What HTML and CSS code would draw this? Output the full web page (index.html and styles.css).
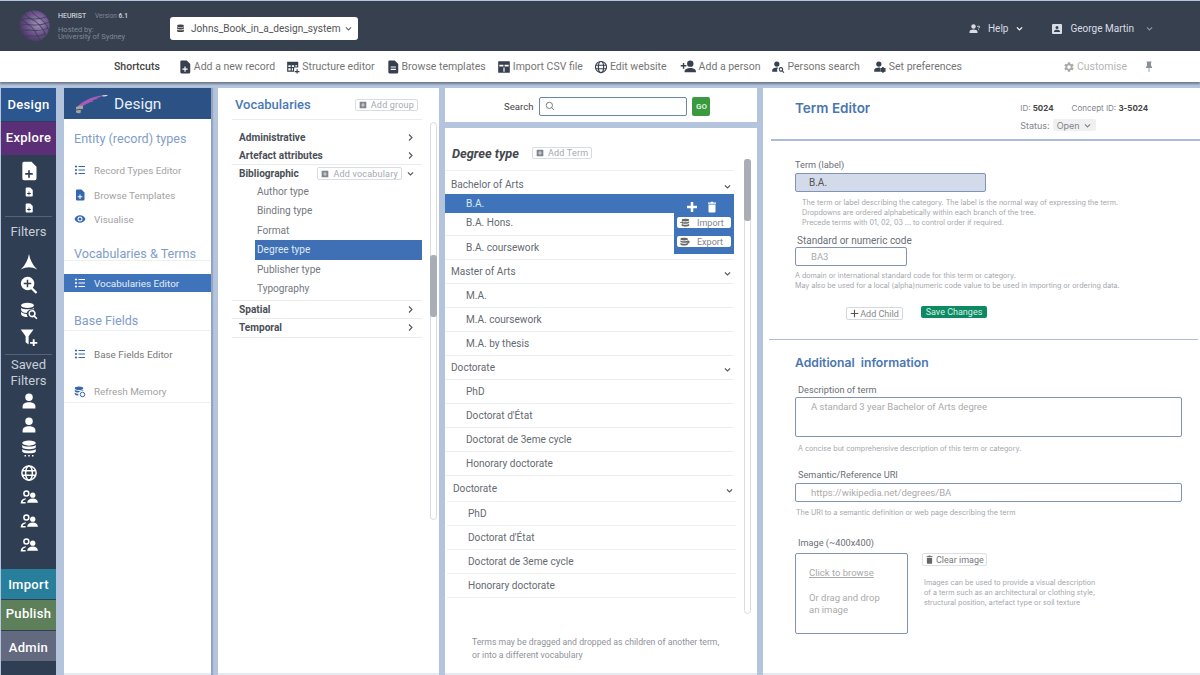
FILE: index.html
```html
<!DOCTYPE html>
<html lang="en">
<head>
  <meta charset="UTF-8" />
  <meta name="viewport" content="width=device-width, initial-scale=1.0" />
  <title>Heurist - Design</title>
  <link rel="stylesheet" href="styles.css">
</head>
<body>
  <svg class="sprite" xmlns="http://www.w3.org/2000/svg">
    <symbol id="i-db" viewBox="0 0 24 24"><ellipse cx="12" cy="5" rx="9" ry="3.5"/><path d="M3 8c2 3 16 3 18 0v4c-2 3.5-16 3.5-18 0zM3 14.5c2 3 16 3 18 0V19c-2 3.5-16 3.5-18 0z"/></symbol>
    <symbol id="i-doc-plus" viewBox="0 0 24 24"><path fill-rule="evenodd" d="M6 1h9l6 6v14a2 2 0 0 1-2 2H6a2 2 0 0 1-2-2V3a2 2 0 0 1 2-2zm5 10v3.5H7.5v2H11V20h2v-3.5h3.5v-2H13V11z"/></symbol>
    <symbol id="i-doc" viewBox="0 0 24 24"><path fill-rule="evenodd" d="M6 1h9l6 6v14a2 2 0 0 1-2 2H6a2 2 0 0 1-2-2V3a2 2 0 0 1 2-2zm2 10v2h9v-2zm0 4v2h9v-2z"/></symbol>
    <symbol id="i-grid" viewBox="0 0 24 24"><path fill-rule="evenodd" d="M2 3h19v10h-7v7H2zm2 6v3h4V9zm6 0v3h4V9zm6 0v2h3V9zM4 14v4h4v-4zm6 0v4h2v-4z"/><path d="M15 19h8v2h-8zM18 16h2v7h-2z"/></symbol>
    <symbol id="i-table" viewBox="0 0 24 24"><path fill-rule="evenodd" d="M3 2h18a1 1 0 0 1 1 1v18a1 1 0 0 1-1 1H3a1 1 0 0 1-1-1V3a1 1 0 0 1 1-1zm8 6H4v3h7zm2 0v3h7V8zm-2 5v7h2v-7z"/></symbol>
    <symbol id="i-globe" viewBox="0 0 24 24"><g fill="none" stroke="currentColor" stroke-width="2"><circle cx="12" cy="12" r="9.5"/><ellipse cx="12" cy="12" rx="4.5" ry="9.5"/><path d="M3 9h18M3 15h18"/></g></symbol>
    <symbol id="i-person" viewBox="0 0 24 24"><circle cx="12" cy="7" r="5"/><path d="M12 13.5c-4.5 0-8.5 2-8.5 5V22h17v-3.5c0-3-4-5-8.5-5z"/></symbol>
    <symbol id="i-person-plus" viewBox="0 0 24 24"><circle cx="14.5" cy="8" r="4.5"/><path d="M14.5 14c-4 0-8 1.8-8 4.5V20h16v-1.5c0-2.7-4-4.5-8-4.5zM1 10h3V7h2v3h3v2H6v3H4v-3H1z"/></symbol>
    <symbol id="i-person-search" viewBox="0 0 24 24"><circle cx="10" cy="7" r="4.5"/><path d="M10 13c-4 0-8 2-8 4.5V20h9a6 6 0 0 1 1-6.8c-.7-.1-1.3-.2-2-.2z"/><path fill-rule="evenodd" d="M17 12a4 4 0 0 1 3.2 6.4l2.7 2.7-1.3 1.3-2.7-2.7A4 4 0 1 1 17 12zm0 2a2 2 0 1 0 0 4 2 2 0 0 0 0-4z"/></symbol>
    <symbol id="i-person-gear" viewBox="0 0 24 24"><circle cx="10" cy="7" r="4.5"/><path d="M10 13c-4 0-8 2-8 4.5V20h10v-7zM18 12l1 1.8 2-.3 1 1.9-1.2 1.6 1.2 1.6-1 1.9-2-.3-1 1.8h-2l-1-1.8-2 .3-1-1.9 1.2-1.6-1.2-1.6 1-1.9 2 .3 1-1.8z"/></symbol>
    <symbol id="i-person-q" viewBox="0 0 24 24"><circle cx="9" cy="7" r="4.5"/><path d="M9 13c-4 0-8 1.8-8 4.5V20h16v-2.5C17 14.8 13 13 9 13zM19 5.5c1.5 0 2.8 1 2.8 2.4 0 1.9-2 1.9-2 3.3h-1.5c0-2.2 2-2.2 2-3.3 0-.5-.6-1-1.3-1s-1.3.4-1.4 1h-1.5c.1-1.4 1.4-2.4 2.9-2.4zM18.3 12.2h1.5v1.5h-1.5z"/></symbol>
    <symbol id="i-badge" viewBox="0 0 24 24"><path fill-rule="evenodd" d="M4 2h16a2 2 0 0 1 2 2v16a2 2 0 0 1-2 2H4a2 2 0 0 1-2-2V4a2 2 0 0 1 2-2zm8 4a3 3 0 1 0 0 6 3 3 0 0 0 0-6zm0 7.5c-3 0-6 1.3-6 3V18h12v-1.5c0-1.7-3-3-6-3z"/></symbol>
    <symbol id="i-gear" viewBox="0 0 24 24"><path d="M19.14 12.94c.04-.3.06-.61.06-.94 0-.32-.02-.64-.07-.94l2.03-1.58a.49.49 0 0 0 .12-.61l-1.92-3.32a.488.488 0 0 0-.59-.22l-2.39.96c-.5-.38-1.03-.7-1.62-.94l-.36-2.54a.484.484 0 0 0-.48-.41h-3.84c-.24 0-.43.17-.47.41l-.36 2.54c-.59.24-1.13.57-1.62.94l-2.39-.96c-.22-.08-.47 0-.59.22L2.74 8.87c-.12.21-.08.47.12.61l2.03 1.58c-.05.3-.09.63-.09.94s.02.64.07.94l-2.03 1.58a.49.49 0 0 0-.12.61l1.92 3.32c.12.22.37.29.59.22l2.39-.96c.5.38 1.03.7 1.62.94l.36 2.54c.05.24.24.41.48.41h3.84c.24 0 .44-.17.47-.41l.36-2.54c.59-.24 1.13-.56 1.62-.94l2.39.96c.22.08.47 0 .59-.22l1.92-3.32c.12-.22.07-.47-.12-.61l-2.01-1.58zM12 15.6c-1.98 0-3.6-1.62-3.6-3.6s1.62-3.6 3.6-3.6 3.6 1.62 3.6 3.6-1.62 3.6-3.6 3.6z"/></symbol>
    <symbol id="i-pin" viewBox="0 0 24 24"><path d="M16 9V3h1V1H7v2h1v6l-2 3v2h5.2v8h1.6v-8H18v-2z"/></symbol>
    <symbol id="i-list" viewBox="0 0 24 24"><circle cx="4" cy="5" r="2.2"/><circle cx="4" cy="12" r="2.2"/><circle cx="4" cy="19" r="2.2"/><path d="M9 3.8h13v2.4H9zM9 10.8h13v2.4H9zM9 17.8h13v2.4H9z"/></symbol>
    <symbol id="i-eye" viewBox="0 0 24 24"><path fill-rule="evenodd" d="M12 4.5c5 0 9.3 3.100 11 7.5-1.700 4.400-6 7.500-11 7.500S2.700 16.400 1 12c1.700-4.400 6-7.500 11-7.500zM12 7a5 5 0 1 0 0 10 5 5 0 0 0 0-10zm0 2a3 3 0 1 1 0 6 3 3 0 0 1 0-6z"/></symbol>
    <symbol id="i-nav" viewBox="0 0 24 24"><path d="M12 1c1 7 4.5 15 11 21-4-2-7.5-3-11-3s-7 1-11 3C7.5 16 11 8 12 1z"/></symbol>
    <symbol id="i-zoom" viewBox="0 0 24 24"><path fill-rule="evenodd" d="M10 1a9 9 0 0 1 7.1 14.5l6 6-2.2 2.2-6-6A9 9 0 1 1 10 1zm-1 4v4H5v2h4v4h2v-4h4V9h-4V5z"/></symbol>
    <symbol id="i-db-search" viewBox="0 0 24 24"><ellipse cx="10" cy="4.5" rx="8.5" ry="3.5"/><path d="M1.5 7.5c1.5 3 15.500 3 17 0v2c-5 0-9 2-9.500 5C5 14.500 2 13 1.500 11zM1.500 13c1 1.500 4 2.500 7.500 3 0 1.500.5 3 1.500 4-4 0-8-1-9-3.500z"/><path fill-rule="evenodd" d="M16 10.500a5 5 0 0 1 4.100 7.900l3.200 3.200-1.500 1.500-3.200-3.200A5 5 0 1 1 16 10.500zm0 2.200a2.800 2.800 0 1 0 0 5.600 2.800 2.800 0 0 0 0-5.600z"/></symbol>
    <symbol id="i-filter-plus" viewBox="0 0 24 24"><path d="M1 2h17l-6.500 9v11l-4-3v-8zM17 15h2.500v3.500H23V21h-3.500v3H17v-3h-3.500v-2.500H17z"/></symbol>
    <symbol id="i-db-dots" viewBox="0 0 24 24"><ellipse cx="12" cy="4" rx="9" ry="3.5"/><path d="M3 6.500c2 3 16 3 18 0V10c-2 3-16 3-18 0zM3 12c2 3 16 3 18 0v3.500c-2 3-16 3-18 0zM6 20h2v2H6zM11 20h2v2h-2zM16 20h2v2h-2z"/></symbol>
    <symbol id="i-users" viewBox="0 0 24 24"><path fill-rule="evenodd" d="M8.500 3a4.300 4.300 0 1 1 0 8.600 4.300 4.300 0 0 1 0-8.600zm0 2a2.300 2.300 0 1 0 0 4.600 2.300 2.300 0 0 0 0-4.600z"/><circle cx="17" cy="9.5" r="3.5"/><path d="M17 14c-3.500 0-7 1.800-7.500 5.500H24C23.500 15.800 20.500 14 17 14zM1 19.500c.3-3.300 3-5.500 7-5.700l-1 2c-2 .3-3.300 1.500-3.600 3.700zM1 18.500h6.500v2H1z"/></symbol>
    <symbol id="i-db-refresh" viewBox="0 0 24 24"><ellipse cx="10" cy="4.5" rx="8.5" ry="3.5"/><path d="M1.500 7.500c1.500 3 15.500 3 17 0v2c-5 0-9 2-9.500 3.500C5 13 2 12 1.500 10.500zM1.500 13c1.500 2 4 2.500 7 2.500V19c-3 0-6-1-7-3z"/><circle cx="17" cy="17" r="4.5" fill="none" stroke="currentColor" stroke-width="2"/></symbol>
    <symbol id="i-plus-box" viewBox="0 0 24 24"><path fill-rule="evenodd" d="M3 2h18a1 1 0 0 1 1 1v18a1 1 0 0 1-1 1H3a1 1 0 0 1-1-1V3a1 1 0 0 1 1-1zm8 4v5H6v2h5v5h2v-5h5v-2h-5V6z"/></symbol>
    <symbol id="i-plus" viewBox="0 0 24 24"><path d="M9.5 2h5v7.5H22v5h-7.500V22h-5v-7.500H2v-5h7.500z"/></symbol>
    <symbol id="i-plus-thin" viewBox="0 0 24 24"><path d="M10.5 2h3v8.500H22v3h-8.500V22h-3v-8.500H2v-3h8.500z"/></symbol>
    <symbol id="i-trash" viewBox="0 0 24 24"><path d="M5 7h14v14a2 2 0 0 1-2 2H7a2 2 0 0 1-2-2zM4 3h5l1-1.5h4L15 3h5v2.5H4z"/></symbol>
    <symbol id="i-db-in" viewBox="0 0 24 24"><ellipse cx="13" cy="5" rx="9" ry="3.5"/><path d="M4 8c2 3 16 3 18 0v3.500c-2 3-16 3-18 0zM4 14c2 3 16 3 18 0v4c-2 3-16 3-18 0zM0 10h5V7l4 4-4 4v-3H0z"/></symbol>
    <symbol id="i-db-out" viewBox="0 0 24 24"><ellipse cx="10" cy="5" rx="9" ry="3.5"/><path d="M1 8c2 3 16 3 18 0v3.500c-2 3-16 3-18 0zM1 14c2 3 16 3 18 0v4c-2 3-16 3-18 0zM15 10h4V7l5 5-5 5v-3h-4z"/></symbol>
    <symbol id="i-chev-d" viewBox="0 0 24 24"><path d="M5 9l7 7 7-7" fill="none" stroke="currentColor" stroke-width="3"/></symbol>
    <symbol id="i-chev-r" viewBox="0 0 24 24"><path d="M8 4l8 8-8 8" fill="none" stroke="currentColor" stroke-width="3"/></symbol>
    <symbol id="i-search" viewBox="0 0 24 24"><g fill="none" stroke="currentColor" stroke-width="1.8"><circle cx="10.5" cy="10.5" r="7.5"/><path d="M16 16l6 6"/></g></symbol>
  </svg>

  <header class="topbar">
    <div class="brand">
      <svg class="brand-logo" viewBox="0 0 36 36">
        <defs>
          <radialGradient id="sphere" cx="62%" cy="42%" r="62%">
            <stop offset="0" stop-color="#a592bd"/>
            <stop offset="0.55" stop-color="#6f5390"/>
            <stop offset="1" stop-color="#42375c"/>
          </radialGradient>
        </defs>
        <circle cx="18" cy="18" r="16.5" fill="url(#sphere)"/>
        <g fill="none" stroke="#39414f" stroke-width="1.1" stroke-opacity="0.8">
          <path d="M3 12c8-5 14 2 30-4M2 18c9-5 16 3 32-4M3 24c9-5 16 3 30-4M7 30c7-4 14 2 23-4"/>
          <path d="M8 5c4 6 10 5 16 12s6 10 7 12M15 2c3 6 9 6 14 12s4 8 5 10M4 10c5 6 10 6 14 12s5 9 6 11"/>
        </g>
      </svg>
      <div class="brand-text">
        <div><span class="brand-name">HEURIST</span><span class="brand-ver">Version <b>6.1</b></span></div>
        <div class="brand-host">Hosted by:<br>University of Sydney</div>
      </div>
    </div>
    <div class="db-select">
      <svg class="ico db-ico"><use href="#i-db"/></svg>
      <span>Johns_Book_in_a_design_system</span>
      <svg class="ico db-chev"><use href="#i-chev-d"/></svg>
    </div>
    <div class="top-right">
      <div class="top-link help"><svg class="ico"><use href="#i-person-q"/></svg><span>Help</span><svg class="ico chev-w"><use href="#i-chev-d"/></svg></div>
      <div class="top-link user"><svg class="ico"><use href="#i-badge"/></svg><span>George Martin</span><svg class="ico chev-dim"><use href="#i-chev-d"/></svg></div>
    </div>
  </header>

  <nav class="shortcuts">
    <b class="sc-title">Shortcuts</b>
    <a class="sc"><svg class="ico"><use href="#i-doc-plus"/></svg>Add a new record</a>
    <a class="sc"><svg class="ico"><use href="#i-grid"/></svg>Structure editor</a>
    <a class="sc"><svg class="ico"><use href="#i-doc"/></svg>Browse templates</a>
    <a class="sc"><svg class="ico"><use href="#i-table"/></svg>Import CSV file</a>
    <a class="sc sc-site"><svg class="ico"><use href="#i-globe"/></svg>Edit website</a>
    <a class="sc"><svg class="ico ico-wide"><use href="#i-person-plus"/></svg>Add a person</a>
    <a class="sc sc-search"><svg class="ico"><use href="#i-person-search"/></svg>Persons search</a>
    <a class="sc"><svg class="ico"><use href="#i-person-gear"/></svg>Set preferences</a>
    <a class="sc customise"><svg class="ico"><use href="#i-gear"/></svg>Customise</a>
    <svg class="ico pin"><use href="#i-pin"/></svg>
  </nav>

  <main class="workspace">
    <aside class="rail">
      <div class="rail-btn design">Design</div>
      <div class="rail-btn explore">Explore</div>
      <div class="rail-icons add-group">
        <svg class="ri r20"><use href="#i-doc-plus"/></svg>
        <svg class="ri r10"><use href="#i-doc-plus"/></svg>
        <svg class="ri r10"><use href="#i-doc-plus"/></svg>
      </div>
      <div class="rail-label filters">Filters</div>
      <div class="rail-icons filter-group">
        <svg class="ri r18 nav"><use href="#i-nav"/></svg>
        <svg class="ri r18"><use href="#i-zoom"/></svg>
        <svg class="ri r18"><use href="#i-db-search"/></svg>
        <svg class="ri r18"><use href="#i-filter-plus"/></svg>
      </div>
      <div class="rail-label saved">Saved<br>Filters</div>
      <div class="rail-icons saved-group">
        <svg class="ri r18"><use href="#i-person"/></svg>
        <svg class="ri r18"><use href="#i-person"/></svg>
        <svg class="ri r18"><use href="#i-db-dots"/></svg>
        <svg class="ri r18"><use href="#i-globe"/></svg>
        <svg class="ri r18"><use href="#i-users"/></svg>
        <svg class="ri r18"><use href="#i-users"/></svg>
        <svg class="ri r18"><use href="#i-users"/></svg>
      </div>
      <div class="rail-bottom">
        <div class="rail-btn import">Import</div>
        <div class="rail-btn publish">Publish</div>
        <div class="rail-btn admin">Admin</div>
      </div>
    </aside>

    <section class="design-panel">
      <div class="dp-head">
        <svg class="dp-logo" viewBox="0 0 34 20">
          <path d="M3 12C9 6 20 1 32 1c-6 1-8 3-11 3 1 .5 2 .5 3 .5-3 1-5 1-7 2.5 1 0 1.500.5 2.500.5-4 0-8 2-12 5z" fill="#a35bb5"/>
          <path d="M27 1.500c2-.5 4-.5 6-.5-1 1-3 1.500-5 1.500z" fill="#d8d4e6"/>
          <path d="M1 13c3-1.500 5-1.500 7-1L8 15c-2 0-5 0-7 .5zM1 16.500c2-.5 4-.5 5-.5l-.5 3c-2 .5-3.500 0-4.500-.5z" fill="#a8a39a"/>
        </svg>
        <span>Design</span>
      </div>
      <h3 class="dp-title first">Entity (record) types</h3>
      <a class="dp-item rt"><svg class="ico"><use href="#i-list"/></svg>Record Types Editor</a>
      <a class="dp-item bt"><svg class="ico"><use href="#i-doc-plus"/></svg>Browse Templates</a>
      <a class="dp-item vi"><svg class="ico"><use href="#i-eye"/></svg>Visualise</a>
      <h3 class="dp-title ruled vt">Vocabularies &amp; Terms</h3>
      <a class="dp-item active"><svg class="ico"><use href="#i-list"/></svg>Vocabularies Editor</a>
      <h3 class="dp-title ruled bf">Base Fields</h3>
      <a class="dp-item bfe"><svg class="ico"><use href="#i-list"/></svg>Base Fields Editor</a>
      <a class="dp-item rm"><svg class="ico"><use href="#i-db-refresh"/></svg>Refresh Memory</a>
    </section>

    <section class="vocab-panel">
      <div class="vp-head">
        <h2>Vocabularies</h2>
        <button class="mini-btn"><svg class="ico"><use href="#i-plus-box"/></svg>Add group</button>
      </div>
      <div class="vp-body">
        <div class="vp-list">
          <div class="grp">Administrative<svg class="ico chev"><use href="#i-chev-r"/></svg></div>
          <div class="grp ruled">Artefact attributes<svg class="ico chev"><use href="#i-chev-r"/></svg></div>
          <div class="grp open">Bibliographic
            <button class="mini-btn"><svg class="ico"><use href="#i-plus-box"/></svg>Add vocabulary</button>
            <svg class="ico chev"><use href="#i-chev-d"/></svg>
          </div>
          <div class="voc">Author type</div>
          <div class="voc">Binding type</div>
          <div class="voc">Format</div>
          <div class="voc sel">Degree type</div>
          <div class="voc">Publisher type</div>
          <div class="voc last">Typography</div>
          <div class="grp ruled tall top-rule">Spatial<svg class="ico chev"><use href="#i-chev-r"/></svg></div>
          <div class="grp ruled tall">Temporal<svg class="ico chev"><use href="#i-chev-r"/></svg></div>
        </div>
        <div class="scroll vp-scroll"><div class="thumb"></div></div>
      </div>
    </section>

    <div class="mid-col">
      <div class="search-box">
        <label>Search</label>
        <div class="search-input"><svg class="ico"><use href="#i-search"/></svg></div>
        <button class="go">GO</button>
      </div>
      <section class="term-panel">
        <div class="tp-head">
          <h2>Degree type</h2>
          <button class="mini-btn"><svg class="ico"><use href="#i-plus-box"/></svg>Add Term</button>
        </div>
        <div class="tp-body">
          <div class="tp-list">
            <div class="t-row t-grp">Bachelor of Arts<svg class="ico chev"><use href="#i-chev-d"/></svg></div>
            <div class="t-row t-sel">B.A.</div>
            <div class="t-row t-ba-hons">B.A. Hons.</div>
            <div class="t-row t-item">B.A. coursework</div>
            <div class="t-row t-grp">Master of Arts<svg class="ico chev"><use href="#i-chev-d"/></svg></div>
            <div class="t-row t-item">M.A.</div>
            <div class="t-row t-item">M.A. coursework</div>
            <div class="t-row t-item">M.A. by thesis</div>
            <div class="t-row t-grp">Doctorate<svg class="ico chev"><use href="#i-chev-d"/></svg></div>
            <div class="t-row t-item">PhD</div>
            <div class="t-row t-item">Doctorat d'État</div>
            <div class="t-row t-item">Doctorat de 3eme cycle</div>
            <div class="t-row t-item">Honorary doctorate</div>
            <div class="shifted">
              <div class="t-row t-grp">Doctorate<svg class="ico chev"><use href="#i-chev-d"/></svg></div>
              <div class="t-row t-item">PhD</div>
              <div class="t-row t-item">Doctorat d'État</div>
              <div class="t-row t-item">Doctorat de 3eme cycle</div>
              <div class="t-row t-item">Honorary doctorate</div>
            </div>
            <div class="t-popup">
              <div class="t-actions"><svg class="ico"><use href="#i-plus"/></svg><svg class="ico"><use href="#i-trash"/></svg></div>
              <button class="pop-btn"><svg class="ico"><use href="#i-db-in"/></svg>Import</button>
              <button class="pop-btn"><svg class="ico"><use href="#i-db-out"/></svg>Export</button>
            </div>
          </div>
          <div class="scroll tp-scroll"><div class="thumb"></div></div>
        </div>
        <p class="tp-note">Terms may be dragged and dropped as children of another term,<br>or into a different vocabulary</p>
      </section>
    </div>

    <section class="editor">
      <div class="ed-head">
        <h2>Term Editor</h2>
        <div class="ed-meta">
          <div class="ed-ids"><span>ID: <b>5024</b></span><span class="concept">Concept ID: <b>3-5024</b></span></div>
          <div class="ed-status">Status: <span class="chip">Open<svg class="ico"><use href="#i-chev-d"/></svg></span></div>
        </div>
      </div>
      <div class="ed-main">
        <label class="lbl term-lbl">Term (label)</label>
        <div class="field term-field">B.A.</div>
        <p class="hint term-hint">The term or label describing the category. The label is the normal way of expressing the term.<br>Dropdowns are ordered alphabetically within each branch of the tree.<br>Precede terms with 01, 02, 03 ... to control order if required.</p>
        <label class="lbl code-lbl">Standard or numeric code</label>
        <div class="field code-field">BA3</div>
        <p class="hint code-hint">A domain or international standard code for this term or category.<br>May also be used for a local (alpha)numeric code value to be used in importing or ordering data.</p>
        <div class="ed-actions">
          <button class="add-child"><svg class="ico"><use href="#i-plus-thin"/></svg>Add Child</button>
          <button class="save">Save Changes</button>
        </div>
      </div>
      <div class="ed-extra">
        <h2>Additional&nbsp; information</h2>
        <label class="lbl desc-lbl">Description of term</label>
        <div class="field desc-field">A standard 3 year Bachelor of Arts degree</div>
        <p class="hint desc-hint">A concise but comprehensive description of this term or category.</p>
        <label class="lbl uri-lbl">Semantic/Reference URI</label>
        <div class="field uri-field">https://wikipedia.net/degrees/BA</div>
        <p class="hint uri-hint">The URI to a semantic definition or web page describing the term</p>
        <label class="lbl img-lbl">Image (~400x400)</label>
        <div class="img-row">
          <div class="img-box">
            <a>Click to browse</a>
            <p>Or drag and drop<br>an image</p>
          </div>
          <div class="img-side">
            <button class="clear"><svg class="ico"><use href="#i-trash"/></svg>Clear image</button>
            <p class="hint">Images can be used to provide a visual description<br>of a term such as an architectural or clothing style,<br>structural position, artefact type or soil texture</p>
          </div>
        </div>
      </div>
    </section>
  </main>
</body>
</html>
```

FILE: styles.css
```css
* {
  box-sizing: border-box;
}

html, body {
  margin: 0;
  height: 100%;
}

body {
  width: 1200px;
  height: 675px;
  overflow: hidden;
  background: #b4c4dd;
  font-family: Roboto, 'Liberation Sans', sans-serif;
  color: #555;
  display: flex;
  flex-direction: column;
  padding-top: 1px;
}

.sprite {
  display: none;
}

.ico {
  width: 12px;
  height: 12px;
  fill: currentColor;
  flex: none;
}

h2, h3, p {
  margin: 0;
  font-weight: normal;
}

button {
  font-family: inherit;
  padding: 0;
  cursor: pointer;
}

/* top bar */
.topbar {
  height: 50px;
  background: #37404f;
  display: flex;
  align-items: center;
  color: #fff;
  flex: none;
}

.brand {
  display: flex;
  align-items: center;
  margin-left: 17px;
  width: 153px;
}

.brand-logo {
  width: 34px;
  height: 34px;
  flex: none;
}

.brand-text {
  margin-left: 7px;
  font-size: 6.5px;
  line-height: 7px;
  color: #7f8898;
}

.brand-name {
  color: #e6e9f0;
  font-size: 7px;
  margin-right: 9px;
}

.brand-ver b {
  color: #c5cad3;
}

.brand-host {
  margin-top: 6px;
  font-size: 7.5px;
}

.db-select {
  width: 188px;
  height: 23px;
  background: #fff;
  border-radius: 3px;
  color: #555;
  font-size: 10.1px;
  display: flex;
  align-items: center;
  padding-left: 6px;
  margin-top: 5px;
}

.db-ico {
  width: 9px;
  height: 9px;
  margin-right: 6px;
  color: #444;
}

.db-chev {
  width: 9px;
  height: 9px;
  margin-left: 3px;
  color: #666;
}

.top-right {
  margin-left: auto;
  display: flex;
  margin-top: 5px;
  font-size: 10px;
  color: #d8dde5;
}

.top-link {
  display: flex;
  align-items: center;
  gap: 7px;
}

.help {
  margin-right: 27px;
}

.chev-w {
  width: 9px;
  height: 9px;
  color: #fff;
}

.user {
  margin-right: 46px;
}

.user .chev-dim {
  width: 9px;
  height: 9px;
  color: #8d96a5;
  margin-left: 4px;
}

/* shortcuts */
.shortcuts {
  height: 31px;
  background: #fff;
  display: flex;
  align-items: center;
  flex: none;
  padding-left: 114px;
  font-size: 10.5px;
  color: #757575;
  box-shadow: 0 2px 2px rgba(50, 60, 80, 0.55);
  position: relative;
}

.sc-title {
  color: #444;
  font-weight: 500;
  margin-right: 18px;
}

.sc {
  display: flex;
  align-items: center;
  gap: 2px;
  margin-right: 11px;
}

.sc-site {
  margin-right: 13px;
}

.sc-search {
  margin-right: 13px;
}

.sc .ico {
  width: 14px;
  height: 14px;
  color: #37404f;
}

.sc .ico-wide {
  width: 17px;
  height: 17px;
}

.customise {
  margin-left: 90px;
  margin-right: 0;
  color: #b5b5b5;
}

.sc.customise .ico {
  width: 12px;
  height: 12px;
  color: #aaa;
}

.shortcuts .pin {
  margin-left: 16px;
  color: #8a8f9a;
}

/* workspace */
.workspace {
  flex: 1;
  min-height: 0;
  display: flex;
  padding-top: 6px;
}

.rail {
  width: 55px;
  margin-left: 1px;
  background: #2f3e52;
  color: #fff;
  display: flex;
  flex-direction: column;
  flex: none;
}

.rail-btn {
  text-align: center;
  font-weight: 500;
  font-size: 13px;
  letter-spacing: 0.3px;
}

.rail-btn.design {
  height: 33px;
  line-height: 33px;
  background: #2c5690;
}

.rail-btn.explore {
  height: 33px;
  line-height: 31px;
  margin-top: 1px;
  background: #5a2f78;
}

.rail-icons {
  display: flex;
  flex-direction: column;
  align-items: center;
}

.ri {
  fill: #fff;
  color: #fff;
  flex: none;
}

.r20 {
  width: 20px;
  height: 20px;
}

.r10 {
  width: 10px;
  height: 10px;
}

.r18 {
  width: 18px;
  height: 18px;
}

.add-group {
  margin-top: 6px;
  height: 55px;
  gap: 6px;
}

.rail-label {
  font-size: 13px;
  color: #c8ced8;
  text-align: center;
  border-top: 1px solid #55637a;
  margin: 0 4px;
}

.filters {
  padding-top: 7px;
  height: 32px;
}

.filter-group {
  gap: 8px;
  margin-top: 5px;
  height: 101px;
}

.filter-group .nav {
  margin-bottom: -3px;
}

.saved {
  line-height: 16px;
  padding-top: 2px;
  height: 38px;
}

.saved-group {
  gap: 6px;
}

.rail-bottom {
  margin-top: 15px;
}

.rail-btn.import {
  height: 30px;
  line-height: 31px;
  background: #277f9b;
}

.rail-btn.publish {
  height: 30px;
  line-height: 28px;
  margin-top: 1px;
  background: #5d7f5a;
}

.rail-btn.admin {
  height: 30px;
  line-height: 33px;
  background: #63697f;
  margin-top: 1px;
}

/* design column */
.design-panel {
  width: 147px;
  margin-left: 8px;
  background: #fff;
  flex: none;
  box-shadow: 2px 0 1px #93a5c2;
  color: #a2a2a2;
  border-bottom: 2px solid #e6e9ee;
}

.dp-head {
  height: 31px;
  background: #2c5285;
  color: #e8eef7;
  font-size: 15.5px;
  display: flex;
  align-items: center;
  padding-left: 11px;
}

.dp-logo {
  width: 34px;
  height: 20px;
  margin-right: 5px;
}

.dp-title {
  font-size: 12.6px;
  color: #7f9dca;
  padding-left: 10px;
  height: 20px;
  line-height: 20px;
}

.dp-title.first {
  margin-top: 10px;
}

.dp-title.ruled {
  border-bottom: 1px solid #eceff3;
}

.dp-item {
  display: flex;
  align-items: center;
  font-size: 9.9px;
  height: 18px;
  padding-left: 10px;
  gap: 8px;
}

.dp-item .ico {
  color: #3567b0;
}

.dp-item.rt {
  margin-top: 12px;
}

.dp-item.bt {
  margin-top: 7px;
}

.dp-item.vi {
  margin-top: 6px;
}

.dp-title.vt {
  margin-top: 16px;
  height: 17px;
}

.dp-item.active {
  margin-top: 13px;
  background: #3f74ba;
  color: #e6edf7;
}

.dp-item.active .ico {
  color: #fff;
}

.dp-title.bf {
  margin-top: 19px;
}

.dp-item.bfe {
  margin-top: 14px;
  color: #777;
}

.dp-item.rm {
  margin-top: 20px;
  height: 20px;
  padding-bottom: 2px;
  border-bottom: 1px solid #eceff3;
}

/* vocabularies column */
.vocab-panel {
  width: 221px;
  margin-left: 7px;
  background: #fff;
  flex: none;
  display: flex;
  flex-direction: column;
  padding: 2px 2px 0 14px;
  border-bottom: 2px solid #e6e9ee;
}

.vp-head {
  height: 30px;
  margin-right: 15px;
  border-bottom: 1px solid #e8eaee;
  display: flex;
  align-items: center;
  justify-content: space-between;
  padding: 0 4px 0 3px;
}

.vp-head h2 {
  color: #4a7ab5;
  font-size: 13px;
  font-weight: 500;
}

.mini-btn {
  display: inline-flex;
  align-items: center;
  gap: 4px;
  height: 12px;
  background: #fff;
  border: 1px solid #d9dce2;
  border-radius: 2px;
  color: #a5a9b0;
  font-size: 9px;
  padding: 0 3px;
  letter-spacing: 0.2px;
}

.mini-btn .ico {
  width: 8px;
  height: 8px;
  color: #80858f;
}

.vp-body {
  flex: 1;
  display: flex;
  min-height: 0;
}

.vp-list {
  width: 190px;
  padding-top: 8px;
}

.grp {
  font-size: 10.1px;
  font-weight: 700;
  color: #4a4f57;
  height: 19px;
  padding: 0 7px;
  display: flex;
  align-items: center;
  justify-content: space-between;
}

.grp.ruled {
  height: 18px;
  border-bottom: 1px solid #e8eaee;
}

.grp.tall {
  height: 19px;
}

.grp.top-rule {
  border-top: 1px solid #e8eaee;
}

.grp.open {
  height: 17px;
}

.grp.open .mini-btn {
  margin-left: auto;
  margin-right: 4px;
  height: 13px;
}

.chev {
  width: 9px;
  height: 9px;
  color: #555;
}

.voc {
  height: 19.4px;
  line-height: 19.4px;
  margin-left: 23px;
  padding-left: 2px;
  font-size: 10.1px;
  color: #747980;
}

.voc.sel {
  background: #3f70b5;
  color: #dfe8f5;
}

.voc.last {
  height: 21px;
}

.scroll {
  width: 7px;
  border: 1px solid #d8dbe0;
  border-radius: 4px;
  position: relative;
}

.scroll .thumb {
  position: absolute;
  left: -1px;
  right: -1px;
  background: #a9adb5;
  border-radius: 3px;
}

.vp-scroll {
  margin: 2px 0 0 8px;
  height: 398px;
}

.vp-scroll .thumb {
  top: 132px;
  height: 62px;
}

/* terms column */
.mid-col {
  width: 312px;
  margin-left: 6px;
  display: flex;
  flex-direction: column;
  flex: none;
}

.search-box {
  height: 34px;
  background: #fff;
  display: flex;
  align-items: center;
  font-size: 9.6px;
  color: #444;
  padding: 2px 0 0 59px;
  flex: none;
}

.search-input {
  width: 148px;
  height: 19px;
  margin-left: 6px;
  border: 1px solid #6d85a8;
  border-radius: 2px;
  display: flex;
  align-items: center;
  padding-left: 5px;
}

.search-input .ico {
  width: 10px;
  height: 10px;
  color: #555;
}

.go {
  width: 18px;
  height: 19px;
  margin-left: 5px;
  background: #3b9a3f;
  border: 0;
  border-radius: 2px;
  color: #d9f0da;
  font-size: 8px;
  font-weight: 700;
}

.term-panel {
  flex: 1;
  margin-top: 6px;
  background: #fff;
  min-height: 0;
  position: relative;
  border-bottom: 2px solid #e6e9ee;
}

.tp-head {
  height: 43px;
  margin-right: 23px;
  padding: 8px 0 0 7px;
  border-bottom: 1px solid #eceef1;
  display: flex;
  align-items: center;
  gap: 13px;
}

.tp-head h2 {
  font-size: 12.8px;
  font-weight: 700;
  font-style: italic;
  color: #44484f;
}

.tp-body {
  display: flex;
}

.tp-list {
  width: 289px;
  position: relative;
}

.t-row {
  height: 24px;
  font-size: 10.1px;
  display: flex;
  align-items: center;
  color: #666b72;
  border-bottom: 1px solid #eceef1;
}

.t-grp {
  padding: 0 2px 0 6px;
  justify-content: space-between;
}

.t-grp .chev {
  margin-top: 4px;
}

.t-item {
  padding-left: 21px;
}

.t-grp:first-child {
  height: 23px;
  padding-top: 3px;
  border: 0;
}

.shifted .t-grp:first-child {
  height: 25px;
  padding-top: 0;
  padding-bottom: 1px;
  border-bottom: 1px solid #eceef1;
}

.t-sel {
  height: 19px;
  background: #3f74ba;
  color: #dbe6f5;
  padding-left: 21px;
  border: 0;
}

.t-ba-hons {
  padding: 0 0 4px 21px;
  height: 23px;
}

.shifted {
  padding: 1px 0 0 2px;
  margin-right: -2px;
}

.t-popup {
  position: absolute;
  left: 229px;
  top: 23px;
  width: 60px;
  height: 60px;
  background: #3f74ba;
  padding-top: 3px;
}

.t-actions {
  display: flex;
  justify-content: flex-end;
  gap: 8px;
  padding-right: 16px;
  color: #fff;
  height: 20px;
  align-items: center;
}

.pop-btn {
  display: flex;
  align-items: center;
  width: 54px;
  height: 11px;
  margin: 0 0 8px 3px;
  padding-left: 3px;
  gap: 7px;
  background: #fff;
  border: 0;
  border-radius: 2px;
  font-size: 9px;
  color: #80858f;
}

.pop-btn .ico {
  width: 10px;
  height: 10px;
  color: #666;
}

.tp-scroll {
  margin: -12px 0 0 10px;
  height: 455px;
}

.tp-scroll .thumb {
  top: -1px;
  height: 62px;
}

.tp-note {
  position: absolute;
  left: 27px;
  top: 508px;
  font-size: 8.7px;
  line-height: 13px;
  color: #8f939b;
}

/* term editor */
.editor {
  width: 437px;
  margin-left: 6px;
  background: #fff;
  flex: none;
  border-bottom: 2px solid #e6e9ee;
}

.ed-head {
  height: 53px;
  margin-left: 8px;
  border-bottom: 2px solid #a9bcd9;
  display: flex;
  padding-left: 24px;
}

.ed-head h2,
.ed-extra h2 {
  font-family: Inter, Roboto, sans-serif;
  font-size: 13.5px;
  line-height: 16px;
  font-weight: 600;
  color: #4a76b1;
}

.ed-extra h2 {
  font-size: 12.2px;
}

.ed-head h2 {
  margin-top: 12px;
}

.ed-meta {
  margin-left: 150px;
  font-family: Inter, Roboto, sans-serif;
  font-size: 8px;
  color: #80858c;
}

.ed-ids {
  margin-top: 15px;
}

.ed-ids b {
  color: #444;
}

.concept {
  margin-left: 18px;
}

.ed-status {
  margin-top: 6px;
  font-size: 9px;
  display: flex;
  align-items: center;
  gap: 3px;
}

.chip {
  display: inline-flex;
  align-items: center;
  gap: 3px;
  background: #f0f0f0;
  border-radius: 2px;
  padding: 1px 4px;
  height: 12px;
}

.chip .ico {
  width: 9px;
  height: 9px;
}

.ed-main {
  height: 199px;
  margin: 0 2px 0 6px;
  border-bottom: 1px solid #a9bcd9;
  padding: 18px 0 0 26px;
}

.lbl {
  display: block;
  font-size: 9.2px;
  color: #6b6f76;
}

.field {
  border: 1px solid #8095b5;
  border-radius: 2px;
  font-size: 9.5px;
  color: #aaa;
  display: flex;
  align-items: center;
}

.hint {
  font-size: 7.15px;
  line-height: 10px;
  color: #a3a6ab;
  font-family: Inter, Roboto, sans-serif;
}

.term-field {
  width: 191px;
  height: 19px;
  margin-top: 3px;
  background: #d3dae9;
  color: #555;
  padding-left: 13px;
  font-size: 10px;
}

.term-hint {
  margin: 6px 0 0 7px;
}

.code-lbl {
  margin: 7px 0 0 2px;
  font-size: 10px;
}

.code-field {
  width: 112px;
  height: 19px;
  margin-top: 1px;
  padding-left: 15px;
}

.code-hint {
  margin-top: 5px;
}

.ed-actions {
  display: flex;
  align-items: flex-start;
  margin-top: 15px;
  padding-left: 51px;
}

.add-child {
  width: 57px;
  height: 13px;
  margin-top: 1px;
  background: #fff;
  border: 1px solid #d5d8dd;
  border-radius: 2px;
  color: #888;
  font-size: 9px;
  display: flex;
  align-items: center;
  justify-content: center;
  gap: 1px;
}

.add-child .ico {
  width: 9px;
  height: 9px;
  color: #555;
}

.save {
  width: 66px;
  height: 12px;
  margin-left: 18px;
  background: #0e8a62;
  border: 0;
  border-radius: 2px;
  color: #d5f0e6;
  font-size: 9px;
}

.ed-extra {
  padding: 15px 0 0 32px;
}

.desc-lbl {
  margin: 13px 0 0 3px;
}

.desc-field {
  width: 387px;
  height: 40px;
  margin-top: 2px;
  padding: 3px 0 0 15px;
  align-items: flex-start;
}

.desc-hint {
  margin: 7px 0 0 3px;
}

.uri-lbl {
  margin: 15px 0 0 3px;
}

.uri-field {
  width: 387px;
  height: 19px;
  margin-top: 3px;
  padding-left: 15px;
}

.uri-hint {
  margin: 6px 0 0 1px;
}

.img-lbl {
  margin: 19px 0 0 3px;
}

.img-row {
  display: flex;
  margin-top: 5px;
}

.img-box {
  width: 113px;
  height: 81px;
  border: 1px solid #8095b5;
  border-radius: 2px;
  padding: 13px 0 0 13px;
  font-size: 9.5px;
  color: #aaa;
  line-height: 12px;
}

.img-box a {
  text-decoration: underline;
}

.img-box p {
  margin-top: 13px;
}

.img-side {
  margin-left: 14px;
}

.clear {
  height: 13px;
  width: 65px;
  background: #fff;
  border: 1px solid #dcdfe4;
  border-radius: 2px;
  color: #777;
  font-size: 9px;
  display: flex;
  align-items: center;
  gap: 2px;
  padding-left: 2px;
}

.clear .ico {
  width: 9px;
  height: 9px;
  color: #666;
}

.img-side .hint {
  margin: 12px 0 0 2px;
}
```
